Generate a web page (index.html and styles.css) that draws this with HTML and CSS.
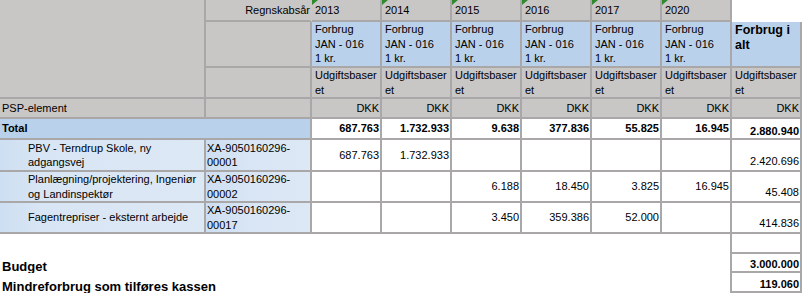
FILE: index.html
```html
<!DOCTYPE html>
<html lang="da">
<head>
<meta charset="utf-8">
<title>Forbrug</title>
<link rel="stylesheet" href="styles.css">
</head>
<body>
<div class="sheet">
  <!-- row 1 -->
  <div class="cell gray corner"></div>
  <div class="cell gray label-right noright">Regnskabsår</div>
  <div class="cell gray year">2013</div>
  <div class="cell gray year">2014</div>
  <div class="cell gray year">2015</div>
  <div class="cell gray year">2016</div>
  <div class="cell gray year">2017</div>
  <div class="cell gray year">2020</div>
  <div class="blank"></div>
  <!-- row 2 -->
  <div class="cell gray"></div>
  <div class="cell blue head">Forbrug<br>JAN - 016<br>1 kr.</div>
  <div class="cell blue head">Forbrug<br>JAN - 016<br>1 kr.</div>
  <div class="cell blue head">Forbrug<br>JAN - 016<br>1 kr.</div>
  <div class="cell blue head">Forbrug<br>JAN - 016<br>1 kr.</div>
  <div class="cell blue head">Forbrug<br>JAN - 016<br>1 kr.</div>
  <div class="cell blue head">Forbrug<br>JAN - 016<br>1 kr.</div>
  <div class="cell blue total-head">Forbrug i<br>alt</div>
  <!-- row 3 -->
  <div class="cell gray"></div>
  <div class="cell gray head">Udgiftsbaser<br>et</div>
  <div class="cell gray head">Udgiftsbaser<br>et</div>
  <div class="cell gray head">Udgiftsbaser<br>et</div>
  <div class="cell gray head">Udgiftsbaser<br>et</div>
  <div class="cell gray head">Udgiftsbaser<br>et</div>
  <div class="cell gray head">Udgiftsbaser<br>et</div>
  <div class="cell gray head">Udgiftsbaser<br>et</div>
  <!-- row 4 -->
  <div class="cell gray text">PSP-element</div>
  <div class="cell gray"></div>
  <div class="cell gray num">DKK</div>
  <div class="cell gray num">DKK</div>
  <div class="cell gray num">DKK</div>
  <div class="cell gray num">DKK</div>
  <div class="cell gray num">DKK</div>
  <div class="cell gray num">DKK</div>
  <div class="cell gray num">DKK</div>
  <!-- row 5 total -->
  <div class="cell blue text bold span2">Total</div>
  <div class="cell white num bold">687.763</div>
  <div class="cell white num bold">1.732.933</div>
  <div class="cell white num bold">9.638</div>
  <div class="cell white num bold">377.836</div>
  <div class="cell white num bold">55.825</div>
  <div class="cell white num bold">16.945</div>
  <div class="cell white num bold low">2.880.940</div>
  <!-- row 6 -->
  <div class="cell lblue item">PBV - Terndrup Skole, ny<br>adgangsvej</div>
  <div class="cell lblue code">XA-9050160296-<br>00001</div>
  <div class="cell white num">687.763</div>
  <div class="cell white num">1.732.933</div>
  <div class="cell white num"></div>
  <div class="cell white num"></div>
  <div class="cell white num"></div>
  <div class="cell white num"></div>
  <div class="cell white num low pad">2.420.696</div>
  <!-- row 7 -->
  <div class="cell lblue item">Planlægning/projektering, Ingeniør<br>og Landinspektør</div>
  <div class="cell lblue code">XA-9050160296-<br>00002</div>
  <div class="cell white num"></div>
  <div class="cell white num"></div>
  <div class="cell white num">6.188</div>
  <div class="cell white num">18.450</div>
  <div class="cell white num">3.825</div>
  <div class="cell white num">16.945</div>
  <div class="cell white num low pad">45.408</div>
  <!-- row 8 -->
  <div class="cell lblue item">Fagentrepriser - eksternt arbejde</div>
  <div class="cell lblue code">XA-9050160296-<br>00017</div>
  <div class="cell white num"></div>
  <div class="cell white num"></div>
  <div class="cell white num">3.450</div>
  <div class="cell white num">359.386</div>
  <div class="cell white num">52.000</div>
  <div class="cell white num"></div>
  <div class="cell white num low pad">414.836</div>
  <!-- row 9 -->
  <div class="summary"></div>
  <div class="cell white"></div>
  <!-- row 10 -->
  <div class="summary sum-budget">Budget</div>
  <div class="cell white num bold low">3.000.000</div>
  <!-- row 11 -->
  <div class="summary sum-rest">Mindreforbrug som tilføres kassen</div>
  <div class="cell white num bold low">119.060</div>
</div>
</body>
</html>
```

FILE: styles.css
```css
html, body {
  margin: 0;
  padding: 0;
  background: #ffffff;
}

.sheet {
  display: grid;
  grid-template-columns: 206px 106px repeat(7, 70px);
  grid-template-rows: 22px 46px 31px 20px 21px 32px 31px 31px 20px 19px 20px;
  font-family: "Liberation Sans", Arial, sans-serif;
  font-size: 11px;
  line-height: 14.5px;
  color: #000;
}

.cell {
  box-sizing: border-box;
  border-right: 2px solid #a9a7a7;
  border-bottom: 2px solid #a9a7a7;
  position: relative;
  white-space: nowrap;
  min-width: 0;
}

.gray { background: #c9c6c6; }
.blue { background: #b9d1ea; }
.white { background: #ffffff; }
.lblue { background: linear-gradient(to right, #cddff2 0px, #d8e5f4 40px, #dde8f5 100%); }

.corner { grid-row: span 3; }

.noright { border-right-color: #c9c6c6; }

.label-right {
  display: flex;
  align-items: center;
  justify-content: flex-end;
  padding-right: 0;
}

.year {
  display: flex;
  align-items: center;
  padding-left: 3px;
}

.year::before {
  content: "";
  position: absolute;
  top: 0;
  left: 0;
  width: 0;
  height: 0;
  border-top: 5px solid #2f8a2f;
  border-right: 6px solid transparent;
}

.blank { background: #ffffff; }

.head {
  padding-left: 3px;
}

.total-head {
  padding: 1px 0 0 3px;
  font-size: 12.5px;
  font-weight: bold;
  line-height: 15px;
}

.text {
  display: flex;
  align-items: center;
  padding-left: 2px;
}

.span2 { grid-column: span 2; }

.bold { font-weight: bold; }

.num {
  display: flex;
  align-items: center;
  justify-content: flex-end;
  padding-right: 1px;
}

.num.low {
  align-items: flex-end;
  line-height: 13px;
}

.num.low.pad { padding-bottom: 2px; }

.item {
  display: flex;
  align-items: center;
  padding-left: 28px;
}

.code {
  display: flex;
  align-items: center;
  padding-left: 1px;
}

.summary {
  grid-column: span 8;
  box-sizing: border-box;
  border-right: 2px solid #a9a7a7;
  background: #ffffff;
  font-size: 13px;
  font-weight: bold;
  line-height: 15px;
  padding-left: 2px;
  white-space: nowrap;
}

.sum-budget { padding-top: 5px; }
.sum-rest { padding-top: 6px; }
```
